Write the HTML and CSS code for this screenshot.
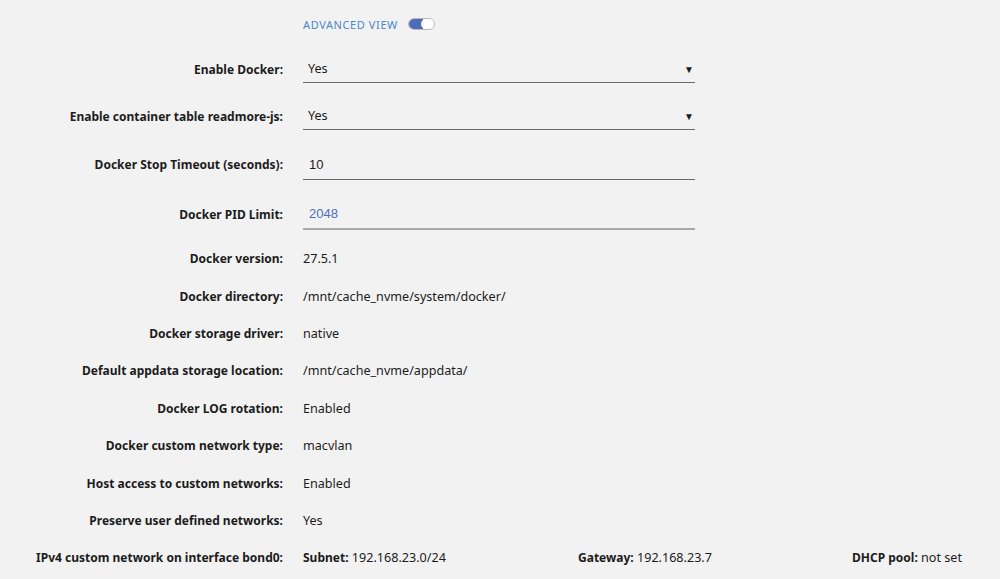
FILE: index.html
```html
<!DOCTYPE html>
<html lang="en">
  <head>
    <meta charset="UTF-8" />
    <title>Docker Settings</title>
    <link rel="stylesheet" href="styles.css">
  </head>
  <body>
    <div class="settings">
      <div class="row view-row">
        <span></span>
        <div class="advanced">
          <span>ADVANCED VIEW</span>
          <span class="switch"><span class="knob"></span></span>
        </div>
      </div>

      <div class="row field">
        <label>Enable Docker:</label>
        <div class="select">Yes<span class="arrow">&#9660;</span></div>
      </div>
      <div class="row field">
        <label>Enable container table readmore-js:</label>
        <div class="select">Yes<span class="arrow">&#9660;</span></div>
      </div>
      <div class="row field">
        <label>Docker Stop Timeout (seconds):</label>
        <input class="text" type="text" value="10" />
      </div>
      <div class="row field last">
        <label>Docker PID Limit:</label>
        <input class="text light" type="text" placeholder="2048" />
      </div>

      <div class="row plain">
        <label>Docker version:</label>
        <span>27.5.1</span>
      </div>
      <div class="row plain">
        <label>Docker directory:</label>
        <span>/mnt/cache_nvme/system/docker/</span>
      </div>
      <div class="row plain">
        <label>Docker storage driver:</label>
        <span>native</span>
      </div>
      <div class="row plain">
        <label>Default appdata storage location:</label>
        <span>/mnt/cache_nvme/appdata/</span>
      </div>
      <div class="row plain">
        <label>Docker LOG rotation:</label>
        <span>Enabled</span>
      </div>
      <div class="row plain">
        <label>Docker custom network type:</label>
        <span>macvlan</span>
      </div>
      <div class="row plain">
        <label>Host access to custom networks:</label>
        <span>Enabled</span>
      </div>
      <div class="row plain">
        <label>Preserve user defined networks:</label>
        <span>Yes</span>
      </div>
      <div class="row plain">
        <label>IPv4 custom network on interface bond0:</label>
        <div class="net">
          <span><b>Subnet:</b> 192.168.23.0/24</span>
          <span><b>Gateway:</b> 192.168.23.7</span>
          <span><b>DHCP pool:</b> not set</span>
        </div>
      </div>
    </div>
  </body>
</html>
```

FILE: styles.css
```css
body {
  margin: 0;
  background-color: #f2f2f2;
  color: #1c1c1c;
  font-family: "Noto Sans", "Open Sans", sans-serif;
  font-size: 12.6px;
}

.settings {
  padding-top: 15px;
}

.row {
  display: grid;
  grid-template-columns: 283px 392px;
  column-gap: 20px;
  align-items: center;
}

.row label {
  text-align: right;
  font-weight: bold;
  font-size: 12px;
}

b {
  font-size: 12px;
}

.view-row {
  height: 18px;
  margin-bottom: 22px;
}

.advanced {
  display: flex;
  align-items: center;
  gap: 10px;
  color: #4a87c9;
  font-size: 11px;
  letter-spacing: 0.6px;
}

.switch {
  position: relative;
  width: 25px;
  height: 10px;
  border: 1px solid #b8b8b8;
  border-radius: 6px;
  background: #fff;
  overflow: hidden;
}

.switch::before {
  content: "";
  position: absolute;
  left: 0;
  top: 0;
  width: 14px;
  height: 10px;
  background: #4f6bb8;
}

.knob {
  position: absolute;
  right: 0;
  top: 0;
  width: 13px;
  height: 10px;
  border-radius: 5px;
  background: #fff;
}

.field {
  margin-bottom: 19px;
}

.field.last {
  margin-bottom: 10px;
}

.select {
  display: flex;
  justify-content: space-between;
  align-items: center;
  height: 27px;
  padding-left: 5px;
  border-bottom: 1px solid #6b6b6b;
}

.arrow {
  font-size: 10px;
  padding-right: 1px;
}

.text {
  box-sizing: border-box;
  height: 31px;
  padding: 0 0 0 6px;
  border: none;
  border-bottom: 1px solid #6b6b6b;
  background: transparent;
  font-family: "Liberation Sans", Arial, sans-serif;
  font-size: 13px;
  color: #1c1c1c;
  outline: none;
}

.text.light {
  border-bottom: 2px solid #a8a8a8;
}

.text::placeholder {
  color: #4a6fc0;
}

.plain {
  height: 37.4px;
}

.net {
  display: grid;
  grid-template-columns: 275px 274px 150px;
  white-space: nowrap;
}
```
